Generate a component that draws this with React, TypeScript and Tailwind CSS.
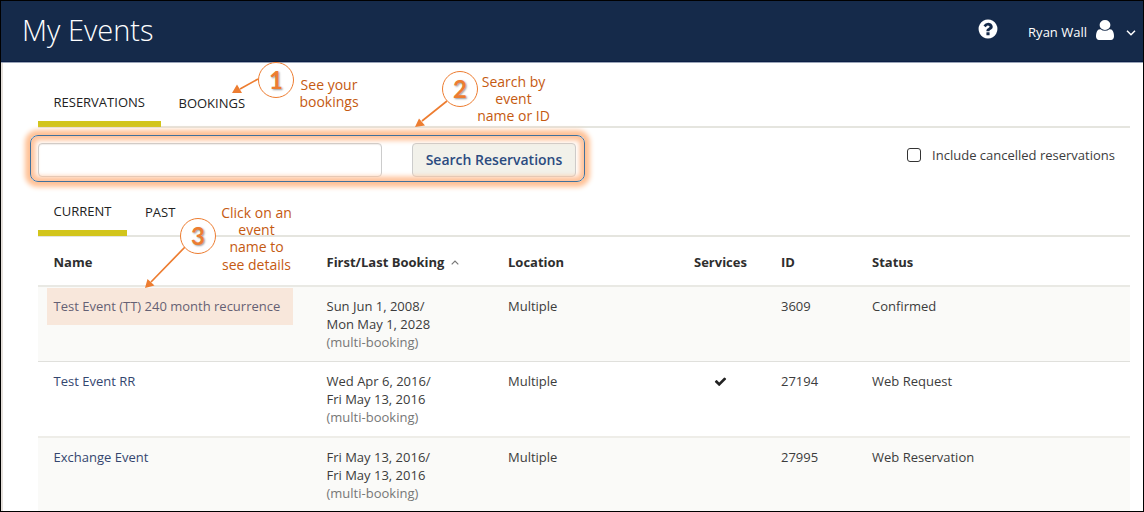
import React from "react";

type Row = {
  name: string;
  first: string;
  last: string;
  services: boolean;
  id: string;
  status: string;
};

const rows: Row[] = [
  { name: "Test Event (TT) 240 month recurrence", first: "Sun Jun 1, 2008/", last: "Mon May 1, 2028", services: false, id: "3609", status: "Confirmed" },
  { name: "Test Event RR", first: "Wed Apr 6, 2016/", last: "Fri May 13, 2016", services: true, id: "27194", status: "Web Request" },
  { name: "Exchange Event", first: "Fri May 13, 2016/", last: "Fri May 13, 2016", services: false, id: "27995", status: "Web Reservation" },
];

const columns = "grid grid-cols-[273px_181.5px_186px_87px_91px_1fr] pl-[15.5px]";

function QuestionIcon() {
  return (
    <svg viewBox="0 0 1792 1792" className="h-[22px] w-[22px] fill-white">
      <path d="M1024 1376v-192q0-14-9-23t-23-9h-192q-14 0-23 9t-9 23v192q0 14 9 23t23 9h192q14 0 23-9t9-23zm256-672q0-88-55.5-163t-138.5-116-170-41q-243 0-371 213-15 24 8 42l132 100q7 6 19 6 16 0 25-12 53-68 86-92 34-24 86-24 48 0 85.5 26t37.5 59q0 38-20 61t-68 45q-63 28-115.5 86.5t-52.5 125.5v36q0 14 9 23t23 9h192q14 0 23-9t9-23q0-19 21.5-49.5t54.5-49.5q32-18 49-28.5t46-35 44.5-48 28-60.5 12.5-81zm384 192q0 209-103 385.5t-279.5 279.5-385.5 103-385.5-103-279.5-279.5-103-385.5 103-385.5 279.5-279.5 385.5-103 385.5 103 279.5 279.5 103 385.5z" />
    </svg>
  );
}

function UserIcon() {
  return (
    <svg viewBox="256 128 1280 1536" preserveAspectRatio="none" className="h-[20px] w-[18px] fill-white">
      <path d="M1536 1399q0 109-62.5 187t-150.5 78h-854q-88 0-150.5-78t-62.5-187q0-85 8.5-160.5t31.5-152 58.5-131 94-89 134.5-34.5q131 128 313 128t313-128q76 0 134.5 34.5t94 89 58.5 131 31.5 152 8.5 160.5zm-256-887q0 159-112.5 271.5t-271.5 112.5-271.5-112.5-112.5-271.5 112.5-271.5 271.5-112.5 271.5 112.5 112.5 271.5z" />
    </svg>
  );
}

function CheckIcon() {
  return (
    <svg viewBox="0 0 1792 1792" className="h-[13px] w-[13px] fill-[#222]">
      <path d="M1671 566q0 40-28 68l-724 724-136 136q-28 28-68 28t-68-28l-136-136-362-362q-28-28-28-68t28-68l136-136q28-28 68-28t68 28l294 295 656-657q28-28 68-28t68 28l136 136q28 28 28 68z" />
    </svg>
  );
}

function Header() {
  return (
    <header className="flex h-[62px] items-start justify-between border-b border-[#9aa5b8] bg-[#152a4a] text-white shadow-[inset_0_-1px_0_#0b1e45]">
      <h1 className="pt-[8px] pl-[21px] text-[29px] leading-[42px] font-light">My Events</h1>
      <div className="flex pt-[17px] pr-[7px]">
        <div className="mr-[29px]"><QuestionIcon /></div>
        <span className="pt-[4px] text-[13px] leading-[20px]">Ryan Wall</span>
        <div className="ml-[9px] pt-[2px]"><UserIcon /></div>
        <svg viewBox="0 0 10 6" className="mt-[12px] ml-[12px] h-[6px] w-[10px]" fill="none" stroke="white" strokeWidth="1.5">
          <path d="M1 0.7 5 4.7 9 0.7" />
        </svg>
      </div>
    </header>
  );
}

function Tab({ label, active, className }: { label: string; active?: boolean; className: string }) {
  return (
    <div className={`${active ? "border-[#d2c51c]" : "border-transparent"} box-border border-b-[6px] text-[13px] leading-[18px] text-[#222] ${className}`}>
      {label}
    </div>
  );
}

function Marker({ value, className }: { value: string; className: string }) {
  return (
    <div className={`absolute flex h-[36px] w-[36px] items-center justify-center rounded-full border border-[#ed7d31] bg-white pb-px font-['Lato',sans-serif] text-[24px] leading-none font-bold text-[#ed7d31] [text-shadow:1px_1px_2px_#0006] ${className}`}>
      {value}
    </div>
  );
}

function Note({ lines, className }: { lines: string[]; className: string }) {
  return (
    <div className={`absolute text-center text-[14px] leading-[17px] whitespace-nowrap text-[#c55a11] ${className}`}>
      {lines.map((line) => <div key={line}>{line}</div>)}
    </div>
  );
}

function Annotations() {
  return (
    <div className="pointer-events-none absolute -inset-px">
      <svg className="absolute inset-0 h-full w-full" viewBox="0 0 1144 512" stroke="#ed7d31" strokeWidth="1.7" fill="#ed7d31">
        <path d="M258 79 240 89M447 101 422 121M185 247 151 282" />
        <path stroke="none" d="M232 93 237 84.500 242 93zM415 127 419 118.500 425 125.500zM145 288 147.500 279 154.500 285.500z" />
      </svg>
      <Marker value="1" className="top-[62px] left-[258px]" />
      <Marker value="2" className="top-[71px] left-[442px]" />
      <Marker value="3" className="top-[218px] left-[180px]" />
      <Note lines={["See your", "bookings"]} className="top-[76px] left-[298px] w-[62px]" />
      <Note lines={["Search by", "event", "name or ID"]} className="top-[73px] left-[476px] w-[75px]" />
      <Note lines={["Click on an", "event", "name to"]} className="top-[204px] left-[219px] w-[75px]" />
      <Note lines={["see details"]} className="top-[256px] left-[219px] w-[75px]" />
      <div className="absolute top-[288px] left-[47px] h-[37px] w-[246px] bg-[#f4b183]/25" />
      <div className="absolute top-[135px] left-[30px] h-[47px] w-[555px] rounded-[8px] border border-[#41719c] shadow-[0_0_5px_4.5px_#ffc195,inset_0_0_5px_4.5px_#ffc39b]" />
    </div>
  );
}

export default function App() {
  return (
    <div className="relative h-[512px] w-[1144px] overflow-hidden border border-black bg-white font-['Open_Sans','Noto_Sans',sans-serif] text-[13px] leading-[18px] text-[#3c3c3c]">
      <Header />
      <main className="h-[448px] border-l-2 border-[#e5e0db] pr-[13px] pl-[35px]">
        <nav className="flex h-[65px] border-b-2 border-[#e5e5df]">
          <Tab label="RESERVATIONS" active className="h-[64px] w-[123px] pt-[30px] pl-[15.5px]" />
          <Tab label="BOOKINGS" className="h-[64px] pt-[31px] pl-[17.5px]" />
        </nav>
        <section className="flex pt-[15px]">
          <input aria-label="Search" className="h-[34px] w-[344px] rounded-[4px] border border-[#ccc] bg-white px-3 shadow-[inset_0_1px_1px_#00000010]" />
          <button className="ml-[30px] h-[34px] w-[164px] rounded-[4px] border border-[#ccc] bg-[#f2f1ea] text-[14px] font-semibold text-[#2b4b80]">
            Search Reservations
          </button>
          <label className="ml-auto flex h-[24px] items-center pr-[15px]">
            <span className="mr-[11px] h-[14px] w-[14px] rounded-[3px] border border-[#333] bg-white" />
            Include cancelled reservations
          </label>
        </section>
        <nav className="mt-[14px] flex h-[46px] border-b-2 border-[#e5e5df]">
          <Tab label="CURRENT" active className="h-[45px] w-[89px] pt-[11px] pl-[15.5px]" />
          <Tab label="PAST" className="h-[45px] pt-[12px] pl-[18px]" />
        </nav>
        <div className={`${columns} h-[50px] border-b-2 border-[#e9e9e4] pt-[16px] font-bold text-[#2e2e2e]`}>
          <div>Name</div>
          <div className="flex items-start">
            First/Last Booking
            <svg viewBox="0 0 8 5" className="mt-[7px] ml-[7px] h-[5px] w-[8px]" fill="none" stroke="#777" strokeWidth="1.2">
              <path d="M0.700 4.300 4 1 7.300 4.300" />
            </svg>
          </div>
          <div>Location</div>
          <div>Services</div>
          <div>ID</div>
          <div>Status</div>
        </div>
        {rows.map((row, index) => (
          <div key={row.id} className={`${columns} ${index % 2 ? "h-[76px] border-b-2 border-[#eeede8]" : "h-[75px] border-b border-[#e0e0dc] bg-[#fafaf8]"} pt-[10px]`}>
            <div className="text-[#34466f]">{row.name}</div>
            <div>
              <div>{row.first}</div>
              <div>{row.last}</div>
              <div className="text-[#777]">(multi-booking)</div>
            </div>
            <div>Multiple</div>
            <div className="pt-[3px] pl-[20px]">{row.services && <CheckIcon />}</div>
            <div>{row.id}</div>
            <div>{row.status}</div>
          </div>
        ))}
      </main>
      <Annotations />
    </div>
  );
}
